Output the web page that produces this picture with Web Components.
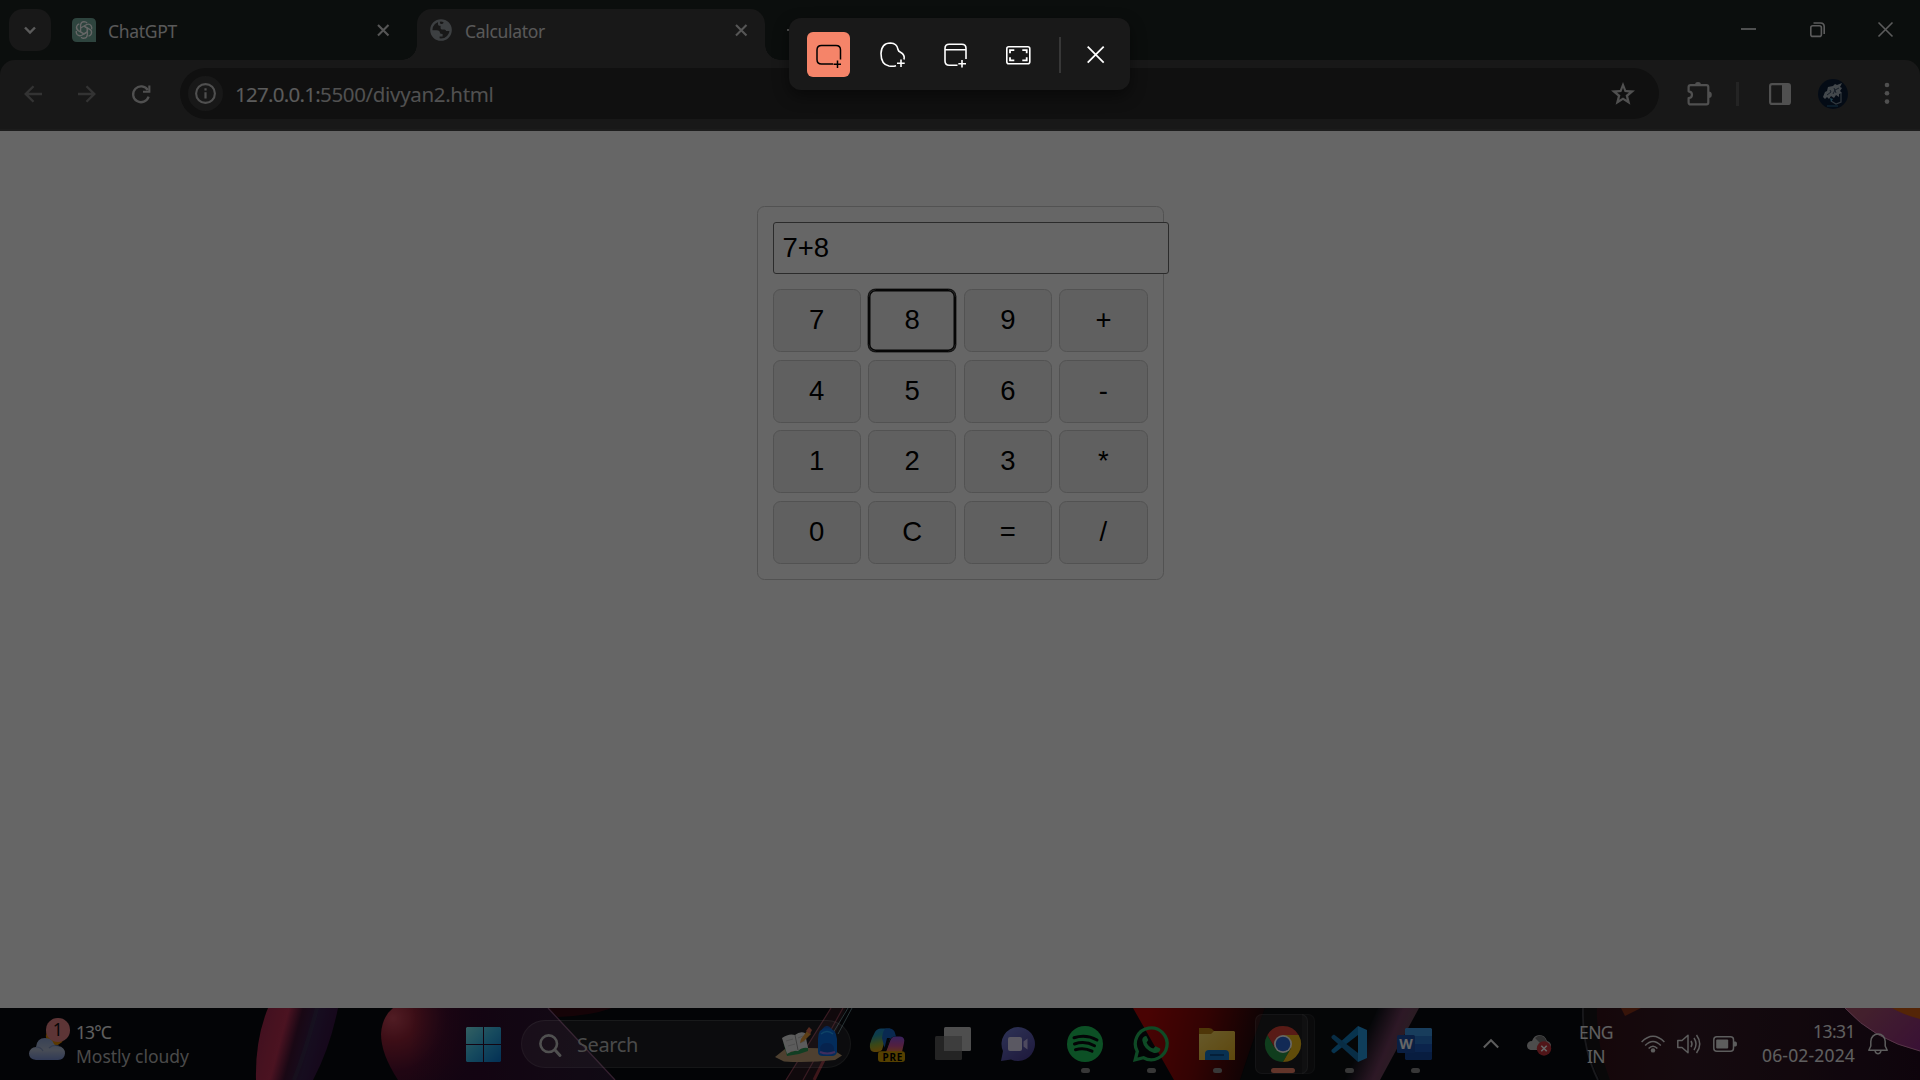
<!DOCTYPE html>
<html lang="en">
<head>
<meta charset="utf-8">
<title>Desktop</title>
<style>
html,body{margin:0;height:100%;overflow:hidden;background:#000}
body{font-family:"Noto Sans","Open Sans",sans-serif}
</style>
</head>
<body>
<desk-top></desk-top>
<script>
const ICONS = {
  chevdown:`<path d="M2 3.5 7 8.5 12 3.5" fill="none" stroke="#e3e3e3" stroke-width="2.4"/>`,
  gpt:`<path d="M5 0H19Q24 0 24 5V24H5Q0 24 0 19V5Q0 0 5 0Z" fill="#74aa9c"/><g fill="none" stroke="#fff" stroke-width="1.3"><path d="M12 8.2 15.4 10.1V16.6Q15.2 19.6 12.3 20.2 10.5 20.4 9 19.2M8.6 14V6.9Q9 4 12 3.7 13.9 3.7 15.1 5"/><path d="M12 8.2 15.4 10.1V16.6Q15.2 19.6 12.3 20.2 10.5 20.4 9 19.2M8.6 14V6.9Q9 4 12 3.7 13.9 3.7 15.1 5" transform="rotate(60 12 12)"/><path d="M12 8.2 15.4 10.1V16.6Q15.2 19.6 12.3 20.2 10.5 20.4 9 19.2M8.6 14V6.9Q9 4 12 3.7 13.9 3.7 15.1 5" transform="rotate(120 12 12)"/></g>`,
  x:`<path d="M1 1 11.5 11.5M11.5 1 1 11.5" fill="none" stroke="#d8d8d8" stroke-width="2.1"/>`,
  globe:`<circle cx="11" cy="11" r="9.7" fill="none" stroke="#9aa0a6" stroke-width="2.2"/><path d="M1.2 11.2H6.5Q10 11.4 10 14 10 15 12.6 15V17.4H9.6V20.6L5 19 1.5 14ZM8 1.5V5.3Q8 6.6 9.3 6.7H10.6V9.2Q10.8 10.5 12.3 10.5H14.4Q16 10.8 16.1 12H21L20.5 7 16 2 13.5 1.3V3.6Q13.5 4.8 12 4.9H10.5L9 1Z" fill="#9aa0a6"/>`,
  min:`<path d="M0 7H15" stroke="#e3e3e3" stroke-width="1.7"/>`,
  restore:`<rect x=".8" y="3.8" width="10.6" height="10.6" rx="2" fill="none" stroke="#e3e3e3" stroke-width="1.6"/><path d="M3.5 1H10.5Q14.2 1 14.2 4.7V12" fill="none" stroke="#e3e3e3" stroke-width="1.6"/>`,
  winclose:`<path d="M.5.5 14.5 14.5M14.5.5.5 14.5" stroke="#e3e3e3" stroke-width="1.6"/>`,
  back:`<path d="M18 9H2M9.5 1.2 1.7 9 9.5 16.8" fill="none" stroke="#808080" stroke-width="2.3"/>`,
  fwd:`<path d="M0 9H16M8.5 1.2 16.3 9 8.5 16.8" fill="none" stroke="#808080" stroke-width="2.3"/>`,
  reload:`<path d="M16.6 11.6A7.9 7.9 0 1 1 15.8 5.2" fill="none" stroke="#c7c7c7" stroke-width="2.3"/><path d="M18.4.5V7.8H11V5.7H16.3V.5Z" fill="#c7c7c7"/>`,
  info:`<circle cx="10.5" cy="10.5" r="9.4" fill="none" stroke="#c7c7c7" stroke-width="2.1"/><path d="M10.5 9.2V15.6M10.5 5.3V7.6" stroke="#c7c7c7" stroke-width="2.2"/>`,
  star:`<path fill-rule="evenodd" d="M12 0 15.1 8 24 8.6 17.2 14.2 19.4 22.8 12 18.1 4.6 22.8 6.8 14.2 0 8.6 8.9 8ZM12 5.8 10.4 10 6 10.5 9.4 13.3 8.3 17.8 12 15.4 15.7 17.8 14.6 13.3 18 10.5 13.6 10Z" fill="#c7c7c7"/>`,
  puzzle:`<path d="M3.6 4.2H19.5Q21.3 4.2 21.3 6V21.6Q21.3 23.4 19.5 23.4H3.8Q1.6 23.4 1.6 21.4V17.2Q5 17 5 13.8T1.6 10.3V6Q1.6 4.2 3.6 4.2Z" fill="none" stroke="#c7c7c7" stroke-width="2.2" stroke-linejoin="round"/><path d="M7.8 3.6A3.3 3.3 0 0 1 14.2 3.6ZM21.6 10.6A3.2 3.2 0 0 1 21.6 17Z" fill="#c7c7c7"/>`,
  side:`<rect x="1.1" y="1.1" width="19.8" height="19.8" rx="2" fill="none" stroke="#c7c7c7" stroke-width="2.2"/><path d="M13 1H21V21H13Z" fill="#c7c7c7"/>`,
  avatar:`<circle cx="15" cy="15" r="15" fill="#0c1d36"/><path d="M5 18 7 13 9 12 10 8 15 7 17 5 19 6 24 4 22 8 24 9 22 12 24 14 21 15 21 18 18 16 16 19 13 17 11 20 9 18 7 20Z" fill="#a9b4bf"/><path d="M9 16 13 13 12 11M15 15 17 11 21 9M18 14 16 9" stroke="#3b4d64" stroke-width="1" fill="none"/><path d="M23 14V23L18 25 13 22" stroke="#7d8c9b" stroke-width="1.2" fill="none"/><path d="M12 19 15 20 13 23Z" fill="#4d9fc4"/><path d="M9 27H20" stroke="#1d4668" stroke-width="2"/>`,
  dots:`<g fill="#c7c7c7"><circle cx="3" cy="3" r="2.3"/><circle cx="3" cy="11.3" r="2.3"/><circle cx="3" cy="19.6" r="2.3"/></g>`,
  sniprect:`<path d="M17 20H5.5Q1 20 1 15.5V6Q1 1.5 5.5 1.5H20Q24.5 1.5 24.5 6V15.5M21.5 16.5V24M17.5 20.2H25" fill="none" stroke="#000" stroke-width="1.5"/>`,
  snipfree:`<path d="M16 23.7Q13 24.6 9 24 1 22.5 1 11.5 1.500 1 10.500 1 17 1.200 18 7.500 18.300 9.300 20.500 10.300 25.200 12.800 24 17.500M21 17.500V25M17 21.300H24.700" fill="none" stroke="#fff" stroke-width="1.6"/>`,
  snipwin:`<path d="M13.5 22.2H5.2Q1 22.2 1 18V5.5Q1 1.3 5.2 1.3H17.8Q22 1.3 22 5.5V16M1 6.7H22M18 17V24.5M14.3 20.8H22" fill="none" stroke="#fff" stroke-width="1.6"/>`,
  snipfull:`<rect x=".8" y=".8" width="23" height="17" rx="2" fill="none" stroke="#fff" stroke-width="1.6"/><path d="M4 7.3V4.2H8.3M16.3 4.2H20.7V7.3M20.7 11.3V14.4H16.3M8.3 14.4H4V11.3" fill="none" stroke="#fff" stroke-width="1.8"/>`,
  snipx:`<path d="M.7.7 16.7 16.7M16.7.7.7 16.7" stroke="#fff" stroke-width="1.8"/>`,
  weather:`<defs><linearGradient id="c" x2="0" y2="1"><stop offset="0" stop-color="#8ea6d6"/><stop offset=".55" stop-color="#b4bfd6"/><stop offset="1" stop-color="#7b93d6"/></linearGradient></defs><circle cx="26" cy="18" r="9.2" fill="#e08a00"/><path d="M7 42Q0 41 0 35.5 1 29 7 29 8 20 16 20 23 20 25 26 26 28 29 28 36 29 36 35.5 35.5 41.5 29 42Z" fill="url(#c)"/><path d="M7 29Q12 29 14 33M20 30Q24 26 30 28" stroke="#6f86bb" stroke-width="1.2" fill="none" opacity=".7"/>`,
  start:`<defs><linearGradient id="s" x2="1" y2="1"><stop offset="0" stop-color="#7ff0f5"/><stop offset=".5" stop-color="#35b6ea"/><stop offset="1" stop-color="#0878d4"/></linearGradient></defs><path d="M1 0H17V17H0V1ZM18 0H34L35 1V17H18ZM0 18H17V35H1L0 34ZM18 18H35V34L34 35H18Z" fill="url(#s)"/>`,
  search:`<circle cx="9.7" cy="9.7" r="8.3" fill="none" stroke="#c8c8c8" stroke-width="2.6"/><path d="M15.8 15.8 21 21.5" stroke="#c8c8c8" stroke-width="3" stroke-linecap="round"/>`,
  school:`<path d="M0 31 10 23Q34 21 57 23L67 29.5 60 34Q34 37 9 35.5Z" fill="#c2a178"/><path d="M8 15 12 30 24 28 33 25 33 20 23 24 13 27Z" fill="#2d9b57"/><path d="M7 12Q14 7 20 9 25 5 30 7L33 22Q27 21 23 25 17 24 12 28Z" fill="#e6e6e6"/><path d="M20 9 23 24" stroke="#999" stroke-width="1"/><path d="M11 15 18 13M13 20 20 18M23 12 28 10M25 17 30 15" stroke="#c4c4c4" stroke-width="1"/><path d="M25 17 26 13 32 5 36 8 29 15Z" fill="#e59b38"/><path d="M31 5 34 1 37 4 35 8Z" fill="#dc6b52"/><path d="M48 4Q52-2 56 4" fill="none" stroke="#1859bd" stroke-width="2.4"/><path d="M43 13Q43 2 52 2T62 13V26Q61 30 57 30H48Q43 30 43 26Z" fill="#096ee4"/><path d="M45 22Q46 17 52 17T59 22V28H46Z" fill="#1158c4"/><path d="M45 26Q52 29 60 26" fill="none" stroke="#9d72e8" stroke-width="2"/><path d="M46 8Q52 3 58 8" stroke="#24a9ff" fill="none" stroke-width="1.5"/>`,
  copilot:`<defs><linearGradient id="a" x2=".2" y2="1"><stop offset="0" stop-color="#1a86e8"/><stop offset=".35" stop-color="#269caf"/><stop offset=".7" stop-color="#8fb33b"/><stop offset="1" stop-color="#e0a310"/></linearGradient><linearGradient id="b" x2="0" y2="1"><stop offset="0" stop-color="#8a54e8"/><stop offset=".6" stop-color="#d0509e"/><stop offset="1" stop-color="#f0803e"/></linearGradient></defs><path d="M17 26 21.500 14Q23 10.500 26 10.500H31Q36.500 11 35 17L33 26Z" fill="url(#b)"/><path d="M6 6Q8 2.500 12 2.500H21L16 14 13 24Q11 26 8 26H5Q0 25 1 18Q3 11 6 6Z" fill="url(#a)"/><path d="M17 2.500H21Q25 3 26 7L27 10.500Q22 10 20 15L17 24 15 20 13 12Q14 3 17 2.500Z" fill="#1768c9"/><path d="M18 12H21L17.500 24H15Z" fill="#0a0a12"/><rect x="9" y="25.300" width="27" height="10.700" rx="3" fill="#d6a000"/>`,
  taskview:`<rect x="0" y="10" width="27" height="24" rx="1.5" fill="#5a5a5a"/><rect x="9" y="1" width="27" height="24" rx="1.500" fill="#c4c4c4"/><path d="M9 10H27V25H9Z" fill="#989898"/>`,
  chat:`<defs><linearGradient id="t" x2=".7" y2="1"><stop offset="0" stop-color="#7481d8"/><stop offset="1" stop-color="#4f449c"/></linearGradient></defs><g transform="translate(-1 0)"><path d="M18 1A17 17 0 1 1 11 33.500L1 35 3 25A17 17 0 0 1 18 1Z" fill="url(#t)"/><rect x="8" y="11" width="14" height="14" rx="2" fill="#e2dcf4"/><path d="M23.500 15.500 27.500 12.500V23.500L23.500 20.500Z" fill="#c3b8ed"/></g>`,
  spotify:`<circle cx="18" cy="18" r="18" fill="#1fc95c"/><path d="M7 11.800Q19 8 30 14M7.500 18Q18 14.500 27.500 19.700M8.500 23.700Q17 21 25 25.200" fill="none" stroke="#080a10" stroke-width="3" stroke-linecap="round"/>`,
  whatsapp:`<path d="M2.200 33.800 4.300 25.500A15.900 15.900 0 1 1 10.500 31.700Z" fill="none" stroke="#24b95c" stroke-width="3.300"/><path d="M12.500 10Q9 11 9.300 14.500 11 24 21 27 26 27.500 27.200 24V22.500L22.500 20.200 20.300 22.600Q15.500 20.800 13.600 16.400L15.300 14 13.500 10.200Z" fill="#24b95c"/>`,
  folder:`<defs><linearGradient id="f" x2="1" y2="1"><stop offset="0" stop-color="#ffdf6b"/><stop offset="1" stop-color="#eab120"/></linearGradient></defs><path d="M0 2H10Q13 2 15 5H34V20H0Z" fill="#c38814"/><path d="M0 8H12L15 5H35L36 6V34H0Z" fill="url(#f)"/><path d="M6 34V28Q6 24 10 24H26Q30 24 30 28V34Z" fill="#1479ca"/><path d="M11 29H25" stroke="#0c4a88" stroke-width="1.800"/>`,
  chrome:`<path d="M2.400 9A18 18 0 0 0 18 36L25.800 22.500 18 18 10.200 22.500Z" fill="#28984a"/><path d="M33.600 9H18L25.800 22.500 18 36A18 18 0 0 0 33.600 9Z" fill="#f3bf1b"/><path d="M2.400 9 10.200 22.500 18 9H33.600A18 18 0 0 0 2.400 9" fill="#dc4437"/><circle cx="18" cy="18" r="9" fill="#fff"/><circle cx="18" cy="18" r="7.300" fill="#2d69d5"/>`,
  vscode:`<path d="M27 0 36 4V32L27 36Z" fill="#279be4"/><path d="M27 9V0L1 23.500Q-1 25.500 3 27.500Z" fill="#127fc4"/><path d="M27 27V36L1 12.500Q-1 10.500 3 8.500Z" fill="#1670ad"/>`,
  word:`<path d="M9 2H34L35 3V12H8V3Z" fill="#3d9ae5"/><path d="M8 10H35V18H8Z" fill="#2879cf"/><path d="M8 18H35V26H8Z" fill="#1c5bbd"/><path d="M8 26H35V33L34 34H9L8 33Z" fill="#1649a0"/><rect x="0" y="9" width="18" height="18" rx="1.500" fill="#1a4fa8"/>`,
  up:`<path d="M.8 8.500 8 1.200 15.200 8.500" fill="none" stroke="#e8e8e8" stroke-width="2"/>`,
  cloud:`<path d="M3.500 15Q0 14 0 10.500.5 6 5 6 7 0 12.500 0T20 6Q24 7 24 11T20 15Z" fill="#bdbdbd"/><path d="M8 3Q13-2 18 3L20 8 14 9Z" fill="#747474"/><circle cx="17" cy="13.500" r="7.200" fill="#c9353d"/><path d="M14.300 10.800 19.700 16.200M19.700 10.800 14.300 16.200" stroke="#fff" stroke-width="1.600"/>`,
  wifi:`<g fill="none" stroke="#e8e8e8" stroke-width="1.500"><path d="M.6 7Q12-4.500 23.400 7M4.200 10.400Q12 2.400 19.800 10.400M7.600 13.600Q12 9 16.400 13.600"/></g><circle cx="12" cy="15.400" r="2.200" fill="#e8e8e8"/>`,
  sound:`<path d="M.8 6.500H5L11 1.200V18.800L5 13.500H.8ZM14 7Q16 10 14 13M17 4Q21 10 17 16M19.500 1Q26 10 19.500 19" fill="none" stroke="#e8e8e8" stroke-width="1.500" stroke-linejoin="round"/>`,
  battery:`<rect x=".8" y=".8" width="19.700" height="14.400" rx="3" fill="none" stroke="#e8e8e8" stroke-width="1.500"/><rect x="3.200" y="3.500" width="12" height="9" rx="1" fill="#e8e8e8"/><path d="M21 5.500H22.500Q24 5.500 24 8T22.500 10.500H21Z" fill="#e8e8e8"/>`,
  bell:`<path d="M2.800 13V8.500A7.200 7.600 0 0 1 17.200 8.500V13L19.200 17.300H.8Z" fill="none" stroke="#e8e8e8" stroke-width="1.500" stroke-linejoin="round"/><path d="M7 18Q8 20.800 10 20.800T13 18" fill="none" stroke="#e8e8e8" stroke-width="1.500"/>`
};

function define(name, html, after) {
  const t = document.createElement('template');
  t.innerHTML = html;
  customElements.define(name, class extends HTMLElement {
    connectedCallback() {
      if (this.shadowRoot) return;
      this.attachShadow({mode:'open'}).appendChild(t.content.cloneNode(true));
      if (after) after(this, this.shadowRoot);
    }
  });
}

/* Inline SVG icon: name, w, h */
customElements.define('ui-icon', class extends HTMLElement {
  connectedCallback() {
    if (this.shadowRoot) return;
    const w = this.getAttribute('w'), h = this.getAttribute('h') || w;
    this.attachShadow({mode:'open'}).innerHTML =
      `<style>:host{display:block;flex:none;width:${w}px;height:${h}px}svg{display:block;overflow:visible}</style><svg width="${w}" height="${h}">${ICONS[this.getAttribute('name')]}</svg>`;
  }
});

/* One line of text, tracked so that it fills the width in its w attribute */
define('fit-text', `<style>:host{display:block;flex:none;white-space:nowrap}span{display:inline-block}</style><span><slot></slot></span>`, (el, root) => {
  const w = +el.getAttribute('w'), s = root.querySelector('span');
  const n = el.textContent.length;
  const nat = s.getBoundingClientRect().width;
  if (w && n && nat) s.style.letterSpacing = ((w - nat) / n).toFixed(3) + 'px';
});

define('browser-tab', `<style>
:host{display:flex;align-items:center;box-sizing:border-box;width:348px;height:51px;padding:0 17.500px 9px 13px;border-radius:15px 15px 0 0;color:#dedede;font-size:17.5px;position:relative}
:host([active]){background:#3d3d3d}
:host([active])::before,:host([active])::after{content:"";position:absolute;bottom:0;width:15px;height:15px}
:host([active])::before{left:-15px;background:radial-gradient(circle at 0 0,transparent 14.500px,#3d3d3d 15px)}
:host([active])::after{right:-15px;background:radial-gradient(circle at 100% 0,transparent 14.500px,#3d3d3d 15px)}
.t{flex:1;padding-top:1px}
</style><slot name="icon"></slot><div class="t"><slot></slot></div><ui-icon name="x" w="12.5"></ui-icon>`);

define('browser-window', `<style>
:host{display:flex;flex-direction:column;height:1008px;background:#1d2321}
.strip{display:flex;height:60px;padding-top:9px;box-sizing:border-box}
.list{width:42px;height:42px;margin-left:9px;border-radius:14px;background:#3d3d3d;display:grid;place-items:center}
.t1{margin-left:8px}.t2{margin-left:10px}
.plus{margin:20px 0 0 22px;width:15px;height:2px;background:#c7c7c7}
.win{margin-left:auto;display:flex;gap:53.500px;padding:13px 27px 0 0}
.bar{display:flex;align-items:center;height:71px;box-sizing:border-box;padding:0 30px 2px 24px;background:#3d3d3d;border-radius:15px 15px 0 0;border-bottom:2px solid #474747}
.omni{display:flex;align-items:center;box-sizing:border-box;width:1479px;height:51px;margin-left:30px;border-radius:26px;background:#282828;padding:0 24px 0 8px;color:#e3e3e3;font-size:20.500px}
.i{width:35px;height:35px;border-radius:50%;background:#3c3c3c;display:grid;place-items:center;margin-right:12px}
.u{display:flex;flex:1}.u fit-text:last-child{color:#cacaca}
.d{width:3px;height:24px;background:#5b5b5b;margin:0 30px 0 24px}
main{flex:1;display:flex;justify-content:center;align-items:flex-start;padding-top:75px;background:#fff}
</style>
<div class="strip"><div class="list"><ui-icon name="chevdown" w="14" h="12"></ui-icon></div>
<browser-tab class="t1"><ui-icon slot="icon" name="gpt" w="24" style="margin-right:12px"></ui-icon><fit-text w="69">ChatGPT</fit-text></browser-tab>
<browser-tab class="t2" active><ui-icon slot="icon" name="globe" w="22" style="margin-right:13px"></ui-icon><fit-text w="80">Calculator</fit-text></browser-tab>
<div class="plus"></div>
<div class="win"><ui-icon name="min" w="15"></ui-icon><ui-icon name="restore" w="15"></ui-icon><ui-icon name="winclose" w="15"></ui-icon></div></div>
<div class="bar"><ui-icon name="back" w="18"></ui-icon><ui-icon name="fwd" w="18" style="margin-left:36px"></ui-icon><ui-icon name="reload" w="18" style="margin-left:36px"></ui-icon>
<div class="omni"><div class="i"><ui-icon name="info" w="21"></ui-icon></div><div class="u"><fit-text w="85">127.0.0.1:</fit-text><fit-text w="173.500">5500/divyan2.html</fit-text></div><ui-icon name="star" w="24"></ui-icon></div>
<ui-icon name="puzzle" w="25" h="26" style="margin-left:28px"></ui-icon><div class="d"></div><ui-icon name="side" w="22"></ui-icon><ui-icon name="avatar" w="30" style="margin-left:27px"></ui-icon><ui-icon name="dots" w="6" h="23" style="margin-left:36px"></ui-icon></div>
<main><calc-pad></calc-pad></main>`);

define('calc-key', `<style>
:host{display:grid;place-items:center;box-sizing:border-box;height:63px;border:1px solid #ccc;border-radius:7.500px;background:#f0f0f0;font-size:27.500px;line-height:31px;padding-bottom:1.500px}
:host([focused]){border:1px solid #101010;background:#f3f3f3;box-shadow:inset 0 0 0 1.500px #101010,0 0 0 .5px #555}
</style><span><slot></slot></span>`);

define('calc-pad', `<style>
:host{display:block;box-sizing:border-box;width:407px;height:374px;padding:15px;border:1px solid #ccc;border-radius:7.500px;font-family:"Liberation Sans",Arial,sans-serif;color:#000}
.screen{box-sizing:border-box;width:396px;height:52px;border:1px solid #6c6c6c;border-radius:3px;padding:0 9px;font-size:27.500px;line-height:50px;background:#fff;position:relative;margin-bottom:15px}
.keys{display:grid;grid-template-columns:repeat(4,1fr);gap:7.500px}
</style><div class="screen">7+8</div><div class="keys"></div>`, (el, root) => {
  root.querySelector('.keys').innerHTML = [...'789+456-123*0C=/'].map(k => `<calc-key${k==='8'?' focused':''}>${k}</calc-key>`).join('');
});

define('wall-paper', `<style>:host{display:block}svg{display:block}.art{filter:brightness(1.5)}</style><svg width="1920" height="72" viewBox="0 0 1920 72">
<defs>
<linearGradient id="g1" gradientUnits="userSpaceOnUse" x1="258" y1="30" x2="325" y2="48"><stop offset="0" stop-color="#6e1c34"/><stop offset=".32" stop-color="#7d2038"/><stop offset=".52" stop-color="#2a0d22"/><stop offset=".75" stop-color="#251634"/><stop offset="1" stop-color="#250d2e"/></linearGradient>
<radialGradient id="g2" gradientUnits="userSpaceOnUse" cx="393" cy="10" r="90"><stop offset="0" stop-color="#86303c"/><stop offset=".25" stop-color="#651826"/><stop offset=".6" stop-color="#370a20"/><stop offset="1" stop-color="#20091d"/></radialGradient>
<linearGradient id="g3" x1="0" x2="1"><stop offset="0" stop-color="#20081f" stop-opacity="0"/><stop offset=".35" stop-color="#20081f"/><stop offset="1" stop-color="#1b1424"/></linearGradient>
<linearGradient id="g4" gradientUnits="userSpaceOnUse" x1="1140" y1="40" x2="1262" y2="70"><stop offset="0" stop-color="#790606"/><stop offset=".45" stop-color="#550505"/><stop offset="1" stop-color="#080608"/></linearGradient>
<linearGradient id="g5" gradientUnits="userSpaceOnUse" x1="1362" y1="36" x2="1412" y2="58"><stop offset="0" stop-color="#0a0c10"/><stop offset=".45" stop-color="#4c2940"/><stop offset="1" stop-color="#3f3832"/></linearGradient>
<linearGradient id="g6" gradientUnits="userSpaceOnUse" x1="1590" y1="0" x2="1920" y2="0"><stop offset="0" stop-color="#240b11"/><stop offset=".3" stop-color="#231219"/><stop offset="1" stop-color="#180815"/></linearGradient>
<linearGradient id="g7" gradientUnits="userSpaceOnUse" x1="1860" y1="0" x2="1910" y2="50"><stop offset="0" stop-color="#71384a"/><stop offset="1" stop-color="#601d58"/></linearGradient>
</defs>
<g class="art">
<path d="M0 0H1920V72H0Z" fill="#06070a"/>
<path d="M268 0H338Q330 40 313 72H256Q255 32 268 0Z" fill="url(#g1)"/><path d="M317 0Q306 42 294 72" stroke="#28313a" stroke-width="4" fill="none" opacity=".3"/>
<path d="M393 0H548L615 72H398Q381 46 381 26 382 9 393 0Z" fill="url(#g2)"/><path d="M410 0H548L615 72H410Z" fill="url(#g3)" opacity=".8"/>
<path d="M548 0H612Q590 8 558 9Z" fill="#24060c"/><path d="M548 0 615 72" stroke="#57354f" stroke-width="1.300"/>
<path d="M831 0H846L816 72H786Z" fill="#1c1015"/><path d="M831 0 786 72M843 0 803 72" stroke="#5e2c38" stroke-width="1.200"/><path d="M828 44 814 72" stroke="#68252c" stroke-width="3"/><path d="M848 0 824 40M852 0 838 26" stroke="#44595d" stroke-width="1"/>
<path d="M1133 0H1265Q1250 40 1240 72H1174Q1158 44 1133 0Z" fill="url(#g4)"/>
<path d="M1265 0H1400L1380 72H1240Z" fill="#0a0b0d" opacity=".8"/>
<path d="M1378 0H1419L1380 72H1345Z" fill="url(#g5)"/>
<path d="M1583 0H1920V72H1600Q1583 40 1583 0Z" fill="#100d10"/><path d="M1597 0H1920V72H1610Q1596 36 1597 0Z" fill="url(#g6)"/><path d="M1583 0Q1582 40 1598 72" fill="none" stroke="#2b2b30" stroke-width="1.800"/><path d="M1621 0H1641L1625 8Z" fill="#5c2210"/>
<path d="M1845 0H1920V43Q1874 32 1845 0Z" fill="url(#g7)"/><path d="M1892 0H1920V11Q1904 7 1892 0Z" fill="#8b3d0c"/><path d="M1845 0Q1874 32 1920 43" stroke="#8f5877" fill="none"/>
</g></svg>`);

define('task-app', `<style>
:host{display:flex;flex-direction:column;align-items:center;justify-content:flex-end;box-sizing:border-box;width:66px;height:72px;padding-bottom:7px;position:relative}
.ic{height:42px}
.ind{width:9px;height:5px;border-radius:2.500px}
:host([open]) .ind{background:#8a8a8a}
:host([active]) .ind{background:#f58469;width:24px}
:host([active])::before{content:"";position:absolute;left:5px;top:6px;width:53px;height:60px;box-sizing:border-box;border-radius:7px;background:#ffffff12;border:1px solid #ffffff18}
:host([active])::after{content:"";position:absolute;left:52px;top:6px;width:13px;height:60px;box-sizing:border-box;border-radius:0 7px 7px 0;background:#ffffff0c;border:1px solid #ffffff10;border-left:0}
.ic,.ind{position:relative;z-index:1}
.lab{position:absolute;z-index:2}
:host([name=copilot]) .lab{left:25px;top:43px;width:27px;font:700 10px/12px "Noto Sans",sans-serif;color:#000;letter-spacing:.8px;text-indent:.8px;text-align:center}
:host([name=word]) .lab{left:15px;top:27px;width:18px;font:700 14px/18px "Noto Sans",sans-serif;color:#fff;text-align:center}
</style><div class="ic"></div><div class="ind"></div><span class="lab"><slot></slot></span>`, (el, root) => {
  root.querySelector('.ic').innerHTML = `<ui-icon name="${el.getAttribute('name')}" w="36"></ui-icon>`;
});

define('task-bar', `<style>
:host{display:grid;height:72px;color:#eee;font-size:17.500px;line-height:24px}
wall-paper,.row{grid-area:1/1}
.row{display:flex;align-items:center;height:72px;position:relative}
.weather{display:flex;width:466px;box-sizing:border-box;padding-left:29px;align-items:center}
.wi{position:relative;margin:0 11px 8px 0}
.wt{padding-bottom:1px}
.badge{position:absolute;left:17px;top:0;width:23.500px;height:23.500px;border-radius:50%;background:#e88588;color:#111;font-size:17.500px;line-height:23px;text-align:center}
.weather fit-text:last-child{color:#b8b8b8}
.search{display:flex;align-items:center;box-sizing:border-box;width:330px;height:48px;margin:0 3px 0 20px;padding:0 8px 0 17px;border-radius:24px;background:#ffffff16;border:1px solid #ffffff1c;border-top-color:#ffffff28;font-size:20px;color:#b9b9b9}
.search fit-text{flex:1;margin:1px 0 0 17px}
.apps{display:flex}
.tray{display:flex;align-items:center;margin-left:auto;padding-right:32px}
.r{display:flex;flex-direction:column;align-items:flex-end}.c{display:flex;flex-direction:column;align-items:center}
</style><wall-paper></wall-paper><div class="row">
<div class="weather"><div class="wi"><ui-icon name="weather" w="36" h="44"></ui-icon><span class="badge">1</span></div><div class="wt"><fit-text w="35">13°C</fit-text><fit-text w="113">Mostly cloudy</fit-text></div></div>
<ui-icon name="start" w="35"></ui-icon>
<div class="search"><ui-icon name="search" w="21"></ui-icon><fit-text w="61">Search</fit-text><ui-icon name="school" w="67" h="37"></ui-icon></div>
<div class="apps"><task-app name="copilot">PRE</task-app><task-app name="taskview"></task-app><task-app name="chat"></task-app><task-app name="spotify" open></task-app><task-app name="whatsapp" open></task-app><task-app name="folder" open></task-app><task-app name="chrome" open active></task-app><task-app name="vscode" open></task-app><task-app name="word" open>W</task-app></div>
<div class="tray"><ui-icon name="up" w="16" h="10"></ui-icon><ui-icon name="cloud" w="24" h="18" style="margin-left:28px"></ui-icon>
<div class="c" style="margin:0 0 0 28px"><fit-text w="34">ENG</fit-text><fit-text w="18">IN</fit-text></div>
<ui-icon name="wifi" w="24" h="18" style="margin-left:28px"></ui-icon><ui-icon name="sound" w="24" h="20" style="margin-left:12px"></ui-icon><ui-icon name="battery" w="24" h="16" style="margin-left:12px"></ui-icon>
<div class="r" style="margin:0 13px 2px 25px"><fit-text w="42">13:31</fit-text><fit-text w="93">06-02-2024</fit-text></div><ui-icon name="bell" w="20" h="22"></ui-icon></div></div>`);

define('snip-toolbar', `<style>
:host{display:flex;align-items:center;box-sizing:border-box;width:341px;height:72px;padding:1px 26px 0 18px;border-radius:12px;background:#191919;box-shadow:0 6px 16px #0007}
.on{width:45px;height:45px;border-radius:6px;background:#f58469;display:flex;align-items:center;justify-content:flex-end}
.on ui-icon{margin-right:9px}
.d{width:2px;height:36px;background:#373737;margin:0 26px 0 28px}
</style><div class="on"><ui-icon name="sniprect" w="25" h="22"></ui-icon></div><ui-icon name="snipfree" w="25" style="margin-left:29.500px"></ui-icon><ui-icon name="snipwin" w="23" h="24" style="margin-left:39px"></ui-icon><ui-icon name="snipfull" w="25" h="18" style="margin-left:39px"></ui-icon><div class="d"></div><ui-icon name="snipx" w="17.400"></ui-icon>`);

define('desk-top', `<style>
:host{display:block;position:relative;width:1920px;height:1080px;overflow:hidden}
.dim{position:absolute;inset:0;background:#0009;z-index:5}
snip-toolbar{position:absolute;left:789px;top:18px;z-index:6}
</style><browser-window></browser-window><task-bar></task-bar><div class="dim"></div><snip-toolbar></snip-toolbar>`);
</script>
</body>
</html>
